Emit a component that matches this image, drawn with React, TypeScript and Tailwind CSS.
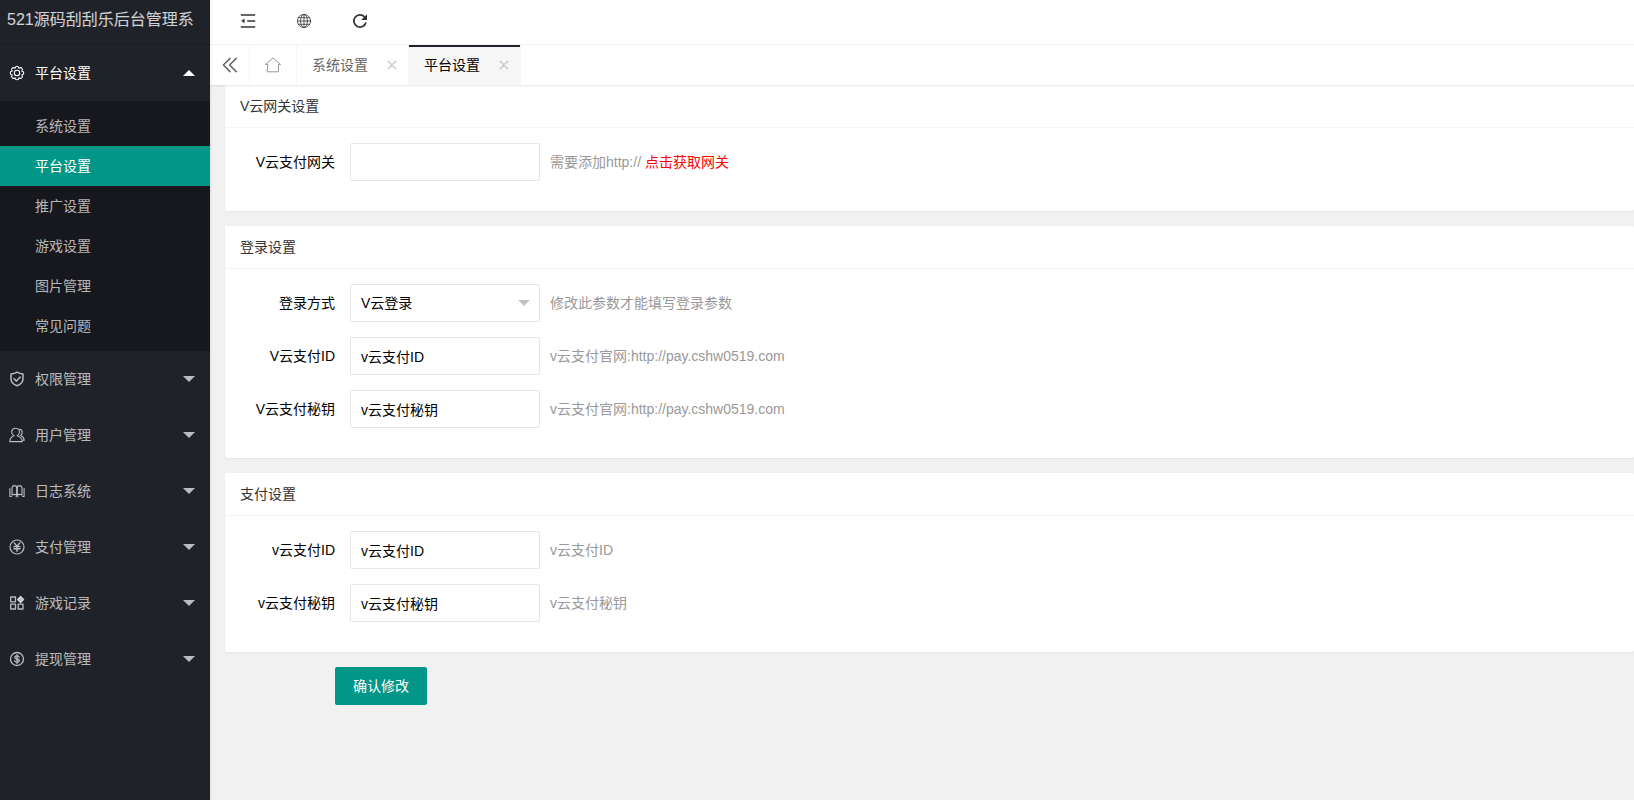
import React from 'react';

const subItems = ['系统设置', '平台设置', '推广设置', '游戏设置', '图片管理', '常见问题'];

const menus = [
  { title: '权限管理', icon: <ShieldIcon /> },
  { title: '用户管理', icon: <UserIcon /> },
  { title: '日志系统', icon: <BookIcon /> },
  { title: '支付管理', icon: <YenIcon /> },
  { title: '游戏记录', icon: <AppsIcon /> },
  { title: '提现管理', icon: <DollarIcon /> }
];

function Icon({ children, width = 1.2 }: { children: React.ReactNode; width?: number }) {
  return (
    <svg
      viewBox="0 0 16 16"
      fill="none"
      stroke="currentColor"
      strokeWidth={width}
      strokeLinecap="round"
      strokeLinejoin="round"
      aria-hidden="true"
      className="size-4 shrink-0">
      {children}
    </svg>
  );
}

function GearIcon() {
  // eight rounded lobes: arcs between the valleys of the rim
  const valleys = Array.from({ length: 8 }, (_, i) => {
    const a = ((i * 45 + 22.5) * Math.PI) / 180;
    return `${(8 + 5.1 * Math.sin(a)).toFixed(2)} ${(8 - 5.1 * Math.cos(a)).toFixed(2)}`;
  });
  const rim = 'M' + valleys[7] + valleys.map((p) => `A1.96 2.3 ${valleys.indexOf(p) * 45} 0 1 ${p}`).join('') + 'z';
  return (
    <Icon width={1.1}>
      <path d={rim} />
      <circle cx="8" cy="8" r="2.7" />
    </Icon>
  );
}

function ShieldIcon() {
  return (
    <Icon width={1.5}>
      <path d="M8 1.2c1.8 1.2 3.8 1.7 6 1.8v5c0 3.2-2.4 5.4-6 6.8C4.4 13.4 2 11.2 2 8V3c2.2-.1 4.2-.6 6-1.8z" />
      <path d="M5 7.8l2.4 2.3L11.3 6" />
    </Icon>
  );
}

function UserIcon() {
  return (
    <Icon width={1.1}>
      <path d="M5 8.8C3.4 7.7 2.7 6.3 2.7 4.9c0-2.2 1.7-3.7 3.9-3.7s3.9 1.5 3.9 3.7c0 1.4-.7 2.8-2.3 3.9 2.8.9 4.9 2.6 5.1 5.8H.8c.1-3.2 1.6-4.9 4.2-5.8z" />
      <path d="M10.600 2.200c1.600.1 2.600 1.400 2.600 3 0 1.300-.5 2.300-1.500 3.200 2.200 1 3.300 2.400 3.500 4.800h-1.300" />
    </Icon>
  );
}

function BookIcon() {
  return (
    <Icon width={1.1}>
      <path d="M3 12V4.600C3.300 3.300 4.200 2.600 5.500 2.600S7.700 3.300 8 4.600v7.600C6.600 11.300 4.700 11.200 3 12z" />
      <path d="M13 12V4.600c-.3-1.300-1.200-2-2.500-2S8.300 3.300 8 4.600v7.600c1.400-.9 3.300-1 5-.2z" />
      <path d="M.9 5.500v8h1.600M15.100 5.500v8h-1.600M7 13.800h2" />
    </Icon>
  );
}

function YenIcon() {
  return (
    <Icon width={1.2}>
      <circle cx="8" cy="8" r="7" />
      <path d="M5.2 3.9L8 7.300l2.800-3.400M8 7.300v4.900M4.900 7.600h6.200M4.900 9.800h6.200" strokeWidth="1.4" />
    </Icon>
  );
}

function AppsIcon() {
  return (
    <Icon width={1.3}>
      <rect x="1.7" y="2" width="4.8" height="4.8" />
      <rect x="1.7" y="9.2" width="4.8" height="4.8" />
      <rect x="9.2" y="9.2" width="4.8" height="4.8" />
      <path d="M11.6 1.5l3 3-3 3-3-3z" fill="currentColor" />
    </Icon>
  );
}

function DollarIcon() {
  return (
    <Icon width={1.3}>
      <circle cx="8" cy="8" r="6.5" />
      <path d="M10.2 6.1C9.900 5.200 9.100 4.800 8 4.800c-1.300 0-2.200.6-2.200 1.600 0 2.200 4.500 1 4.500 3.200 0 1-.9 1.600-2.300 1.600-1.200 0-2.100-.5-2.300-1.500M8 3.600v8.800" />
    </Icon>
  );
}

function Triangle({ up = false, className = '' }: { up?: boolean; className?: string }) {
  return (
    <svg viewBox="0 0 12 6" className={'h-1.5 w-3 ' + className} aria-hidden="true">
      <path d={up ? 'M0 6L6 0l6 6z' : 'M0 0h12L6 6z'} fill="currentColor" />
    </svg>
  );
}

function Sidebar() {
  return (
    <aside className="relative z-20 w-[210px] shrink-0 bg-[#20222a] text-white/70 shadow-[1px_0_2px_rgba(0,0,0,0.08)]">
      <h1 className="h-[45px] overflow-hidden border-b border-black/20 pl-[7px] text-base leading-10 whitespace-nowrap text-white/80">
        521源码刮刮乐后台管理系
      </h1>
      <nav>
        <button type="button" className="flex h-14 w-full items-center pr-[15px] pl-[9px] text-white">
          <GearIcon />
          <span className="ml-2.5">平台设置</span>
          <Triangle up className="ml-auto" />
        </button>
        <ul className="bg-[#17181d] py-[5px]">
          {subItems.map((item) => (
            <li key={item}>
              <a
                href="#"
                className={
                  item === '平台设置' ?
                  'block bg-[#009688] pl-[35px] leading-10 text-white' :
                  'block pl-[35px] leading-10 hover:text-white'
                }>
                {item}
              </a>
            </li>
          ))}
        </ul>
        {menus.map((menu) => (
          <button key={menu.title} type="button" className="flex h-14 w-full items-center pr-[15px] pl-[9px] hover:text-white">
            {menu.icon}
            <span className="ml-2.5">{menu.title}</span>
            <Triangle className="ml-auto" />
          </button>
        ))}
      </nav>
    </aside>
  );
}

function Header() {
  return (
    <header className="flex h-[45px] items-center gap-10 border-b border-[#f6f6f6] bg-white pb-0.5 pl-[30px] text-[#333]">
      <button type="button" aria-label="侧边伸缩">
        <Icon width={1.7}>
          <path d="M.8 2h14.4M7.200 8h8M.8 14h14.400" strokeLinecap="butt" />
          <path d="M4.300 6.300v3.400L1.700 8z" fill="currentColor" strokeWidth="0.5" />
        </Icon>
      </button>
      <button type="button" aria-label="前台">
        <Icon width={0.8}>
          <circle cx="8" cy="8" r="6.6" />
          <ellipse cx="8" cy="8" rx="3.4" ry="6.6" />
          <path d="M8 1.400v13.200M1.400 8h13.200M2.300 4.700h11.400M2.300 11.300h11.400" />
        </Icon>
      </button>
      <button type="button" aria-label="刷新">
        <Icon width={1.8}>
          <path d="M13.9 9.500A6.100 6.100 0 1 1 12.600 4" strokeLinecap="butt" />
          <path d="M15 1.200v5.800H9.200z" fill="currentColor" stroke="none" />
        </Icon>
      </button>
    </header>
  );
}

function Tab({ title, active = false }: { title: string; active?: boolean }) {
  return (
    <li
      className={
        active ?
        'relative flex items-center border-r border-[#f6f6f6] bg-[#f6f6f6] pr-2 pl-[15px] text-black' :
        'flex items-center border-r border-[#f6f6f6] pr-2 pl-[15px] text-[#666]'
      }>
      {active && <span className="absolute inset-x-0 top-0 h-0.5 bg-[#20222a]" />}
      <a href="#">{title}</a>
      <button type="button" aria-label={'关闭' + title} className="ml-4 text-[#c8c8c8]">
        <Icon width={1.4}>
          <path d="M4.3 4.3l7.4 7.4M11.7 4.3l-7.4 7.4" />
        </Icon>
      </button>
    </li>
  );
}

function Tabs() {
  return (
    <div className="relative z-10 flex h-10 bg-white shadow-[0_1px_2px_rgba(0,0,0,0.1)]">
      <button type="button" aria-label="向左" className="flex w-10 items-center justify-center border-r border-[#f6f6f6] text-[#666]">
        <Icon width={1.5}>
          <path d="M8 1.4L1.400 8 8 14.600M14.200 1.400L7.600 8l6.600 6.600" />
        </Icon>
      </button>
      <a href="#" aria-label="主页" className="flex w-[47px] items-center justify-center border-r border-[#f6f6f6] text-[#999]">
        <Icon width={1}>
          <path d="M2.5 7.500H.5L8 1l7.500 6.500h-2v7.300h-11z" />
        </Icon>
      </a>
      <ul className="flex">
        <Tab title="系统设置" />
        <Tab title="平台设置" active />
      </ul>
    </div>
  );
}

function Card({ title, children }: { title: string; children: React.ReactNode }) {
  return (
    <section className="mb-[15px] rounded-xs bg-white shadow-[0_1px_2px_rgba(0,0,0,0.05)]">
      <h2 className="h-[43px] border-b border-[#f6f6f6] px-[15px] leading-[42px] text-[#333]">{title}</h2>
      <div className="space-y-[15px] px-[15px] pt-[15px] pb-[30px]">{children}</div>
    </section>
  );
}

type FieldProps = {
  id: string;
  label: string;
  value?: string;
  select?: boolean;
  hint: React.ReactNode;
};

function Field({ id, label, value = '', select = false, hint }: FieldProps) {
  return (
    <div className="flex items-center">
      <label htmlFor={id} className="w-[95px] shrink-0 text-right text-black">
        {label}
      </label>
      <div className="relative ml-[15px] w-[190px] shrink-0">
        {select ?
        <>
          <select id={id} className="h-[38px] w-full appearance-none rounded-xs border border-[#e6e6e6] bg-white px-2.5 text-black">
            <option>{value}</option>
          </select>
          <Triangle className="pointer-events-none absolute top-4 right-2.5 text-[#c2c2c2]" />
        </> :
        <input
          id={id}
          type="text"
          defaultValue={value}
          className="h-[38px] w-full rounded-xs border border-[#e6e6e6] bg-white px-2.5 text-black" />
        }
      </div>
      <div className="ml-2.5 text-[#999]">{hint}</div>
    </div>
  );
}

export default function App() {
  return (
    <div className="flex min-h-screen bg-[#f1f1f1] font-['Liberation_Sans','Noto_Sans_CJK_SC',sans-serif] text-sm">
      <Sidebar />
      <div className="min-w-0 flex-1">
        <Header />
        <Tabs />
        <form className="pl-[15px]">
          <Card title="V云网关设置">
            <Field
              id="gateway"
              label="V云支付网关"
              hint={<>需要添加http:// <a href="#" className="text-[#ff0000]">点击获取网关</a></>} />
          </Card>
          <Card title="登录设置">
            <Field id="login-type" label="登录方式" value="V云登录" select hint="修改此参数才能填写登录参数" />
            <Field id="login-id" label="V云支付ID" value="v云支付ID" hint="v云支付官网:http://pay.cshw0519.com" />
            <Field id="login-key" label="V云支付秘钥" value="v云支付秘钥" hint="v云支付官网:http://pay.cshw0519.com" />
          </Card>
          <Card title="支付设置">
            <Field id="pay-id" label="v云支付ID" value="v云支付ID" hint="v云支付ID" />
            <Field id="pay-key" label="v云支付秘钥" value="v云支付秘钥" hint="v云支付秘钥" />
          </Card>
          <button type="button" className="ml-[110px] h-[38px] rounded-xs bg-[#009688] px-[18px] text-white hover:opacity-80">
            确认修改
          </button>
        </form>
      </div>
    </div>
  );
}
